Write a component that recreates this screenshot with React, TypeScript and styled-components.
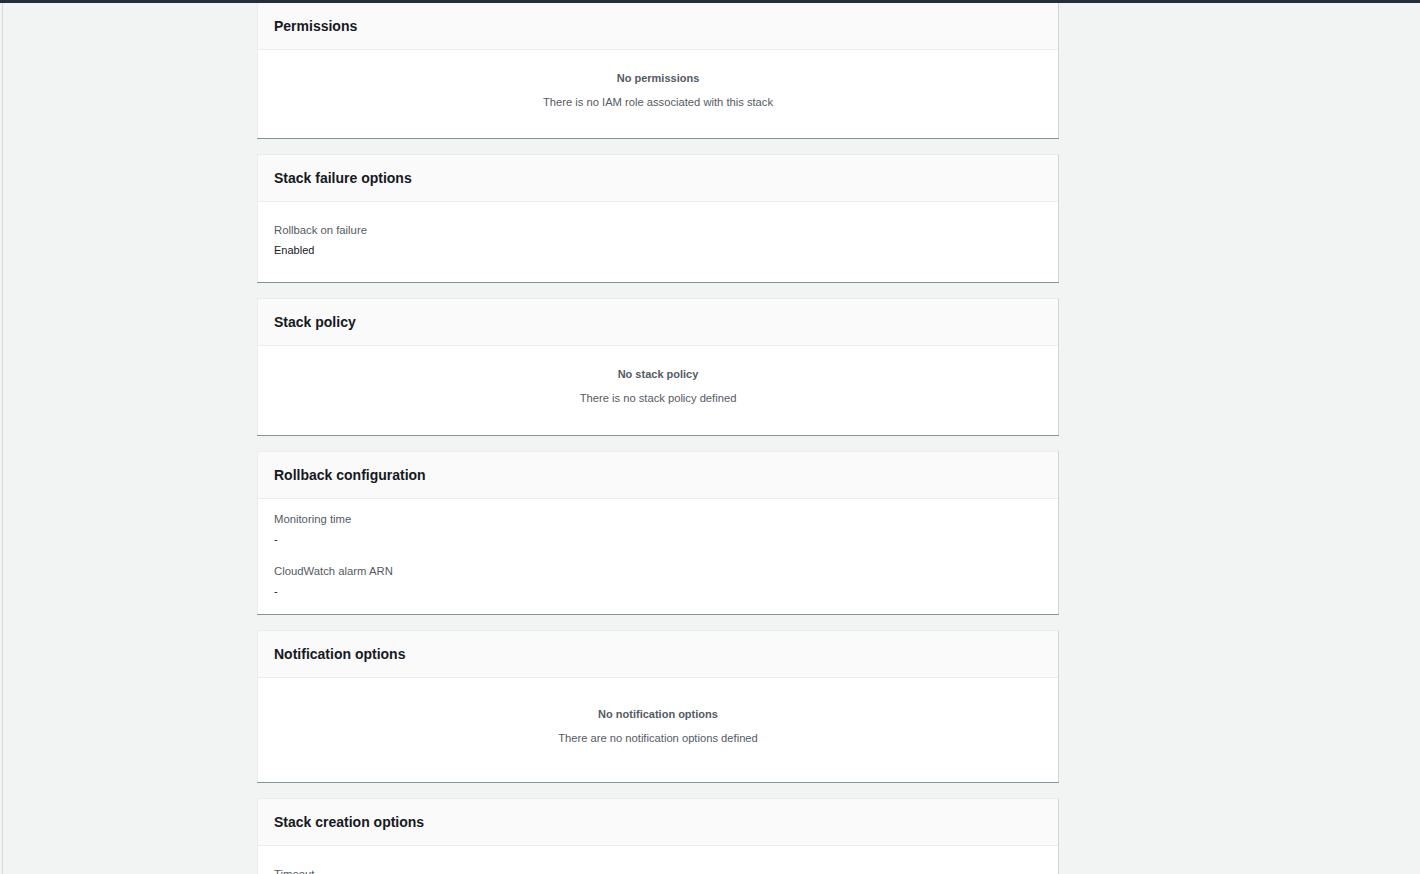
import React from 'react';
import styled, { createGlobalStyle } from 'styled-components';

const GlobalStyle = createGlobalStyle`
  html, body {
    margin: 0;
    padding: 0;
    background-color: #f2f3f3;
    overflow: hidden;
  }
  body {
    font-family: 'Liberation Sans', Arial, sans-serif;
    color: #16191f;
    -webkit-font-smoothing: antialiased;
  }
`;

const TopBar = styled.div`
  height: 3px;
  background-color: #232f3e;
  position: relative;
  z-index: 2;
`;

const Page = styled.div`
  display: flex;
  min-height: 871px;
`;

const Rail = styled.div`
  width: 2px;
  flex-shrink: 0;
  border-right: 1px solid #d5dbdb;
`;

const Main = styled.main`
  display: flex;
  flex-direction: column;
  gap: 16px;
  width: 802px;
  margin-top: -1px;
  padding-left: 254px;
`;

const Card = styled.section`
  background-color: #ffffff;
  border: 1px solid #eaeded;
  border-right-color: #cfd4d4;
  border-bottom: none;
  box-shadow: 0 1px 0 0 #879596;
`;

const CardHeader = styled.div`
  display: flex;
  align-items: center;
  height: 46px;
  padding: 0 16px;
  background-color: #fafafa;
  border-bottom: 1px solid #eaeded;
`;

const CardTitle = styled.h2`
  margin: 0;
  font-size: 14px;
  font-weight: 700;
  line-height: 20px;
  color: #16191f;
`;

const CardBody = styled.div<{ $top: number; $bottom: number }>`
  display: flex;
  flex-direction: column;
  gap: 12px;
  padding: ${(p) => p.$top}px 16px ${(p) => p.$bottom}px;
`;

const EmptyState = styled.div`
  display: flex;
  flex-direction: column;
  align-items: center;
  gap: 2px;
  text-align: center;
`;

const EmptyTitle = styled.div`
  font-size: 11px;
  font-weight: 700;
  line-height: 22px;
  color: #545b64;
`;

const EmptyText = styled.div`
  font-size: 11.2px;
  line-height: 22px;
  color: #545b64;
`;

const Field = styled.div`
  display: flex;
  flex-direction: column;
`;

const FieldLabel = styled.div`
  font-size: 11.3px;
  line-height: 20px;
  color: #545b64;
`;

const FieldValue = styled.div`
  font-size: 11px;
  line-height: 20px;
  color: #16191f;
`;

type FieldData = { label: string; value: string };

type Section =
  | { title: string; kind: 'empty'; heading: string; text: string; top: number; bottom: number }
  | { title: string; kind: 'fields'; fields: FieldData[]; top: number; bottom: number };

const sections: Section[] = [
  {
    title: 'Permissions',
    kind: 'empty',
    heading: 'No permissions',
    text: 'There is no IAM role associated with this stack',
    top: 17,
    bottom: 25,
  },
  {
    title: 'Stack failure options',
    kind: 'fields',
    fields: [{ label: 'Rollback on failure', value: 'Enabled' }],
    top: 18,
    bottom: 22,
  },
  {
    title: 'Stack policy',
    kind: 'empty',
    heading: 'No stack policy',
    text: 'There is no stack policy defined',
    top: 17,
    bottom: 26,
  },
  {
    title: 'Rollback configuration',
    kind: 'fields',
    fields: [
      { label: 'Monitoring time', value: '-' },
      { label: 'CloudWatch alarm ARN', value: '-' },
    ],
    top: 10,
    bottom: 13,
  },
  {
    title: 'Notification options',
    kind: 'empty',
    heading: 'No notification options',
    text: 'There are no notification options defined',
    top: 25,
    bottom: 33,
  },
  {
    title: 'Stack creation options',
    kind: 'fields',
    fields: [
      { label: 'Timeout', value: '-' },
      { label: 'Termination protection', value: 'Disabled' },
    ],
    top: 18,
    bottom: 22,
  },
];

const App: React.FC = () => {
  return (
    <>
      <GlobalStyle />
      <TopBar />
      <Page>
        <Rail />
        <Main>
          {sections.map((s) => (
            <Card key={s.title}>
              <CardHeader>
                <CardTitle>{s.title}</CardTitle>
              </CardHeader>
              <CardBody $top={s.top} $bottom={s.bottom}>
                {s.kind === 'empty' ? (
                  <EmptyState>
                    <EmptyTitle>{s.heading}</EmptyTitle>
                    <EmptyText>{s.text}</EmptyText>
                  </EmptyState>
                ) : (
                  s.fields.map((f) => (
                    <Field key={f.label}>
                      <FieldLabel>{f.label}</FieldLabel>
                      <FieldValue>{f.value}</FieldValue>
                    </Field>
                  ))
                )}
              </CardBody>
            </Card>
          ))}
        </Main>
      </Page>
    </>
  );
};

export default App;
